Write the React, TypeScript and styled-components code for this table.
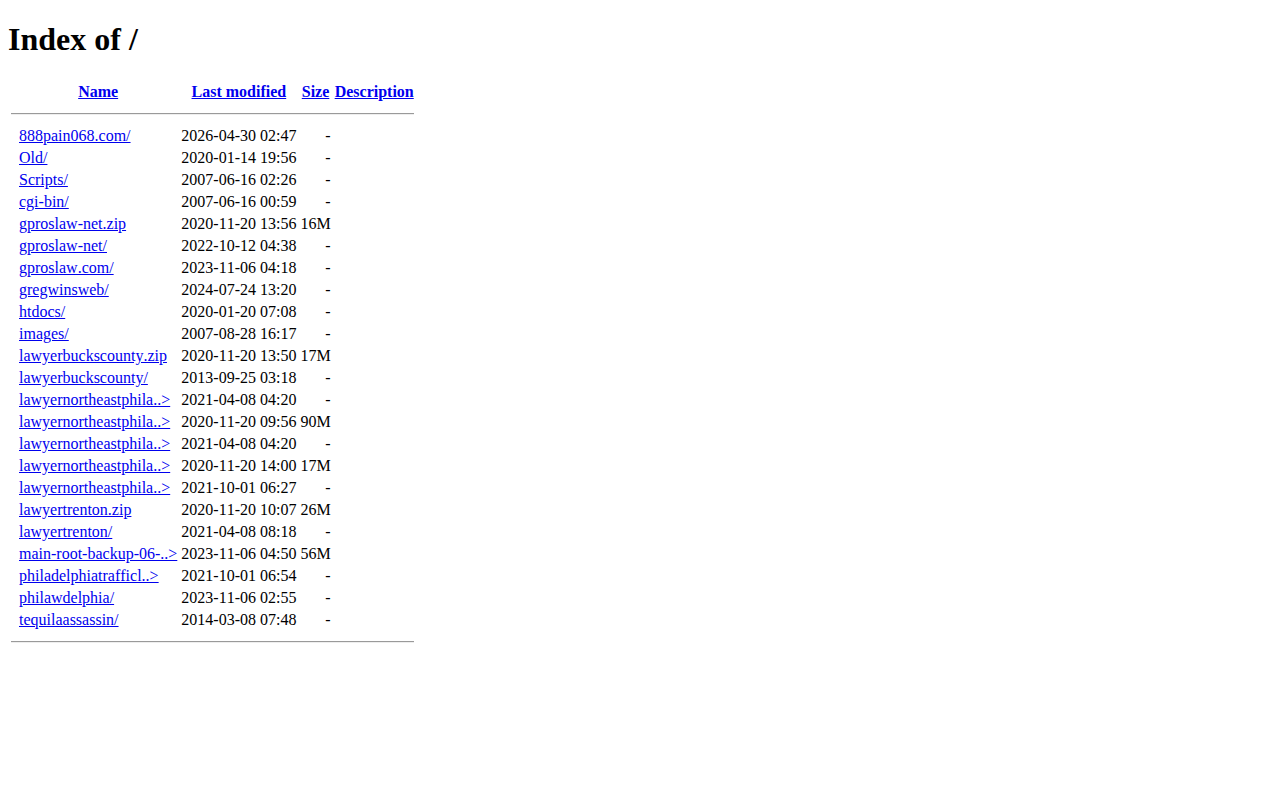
import React from "react";
import styled, { createGlobalStyle } from "styled-components";

const Global = createGlobalStyle`
  html, body {
    background: #ffffff;
  }
  body {
    margin: 8px;
    font-family: "Liberation Serif", "Times New Roman", serif;
    font-size: 16px;
    color: #000000;
    font-kerning: none;
    font-feature-settings: "kern" 0;
  }
`;

const Title = styled.h1`
  font-size: 2em;
  font-weight: bold;
  margin: 13.44px 0 21.44px;
`;

const Listing = styled.table`
  border-collapse: separate;
  border-spacing: 2px;
  font-size: 16px;
`;

const HeadCell = styled.th`
  padding: 1px;
  font-weight: bold;
  text-align: center;
  vertical-align: middle;
`;

const Cell = styled.td<{ $right?: boolean }>`
  padding: 1px;
  text-align: ${(p) => (p.$right ? "right" : "left")};
  vertical-align: middle;
`;

const Link = styled.a`
  color: #0000ee;
  text-decoration: underline;
`;

const Rule = styled.hr`
  margin: 8px 0;
  border: none;
  border-top: 1px solid #9a9a9a;
  border-bottom: 1px solid #eeeeee;
  height: 0;
`;

type Entry = { name: string; date: string; size: string };

const entries: Entry[] = [
  { name: "888pain068.com/", date: "2026-04-30 02:47", size: "-" },
  { name: "Old/", date: "2020-01-14 19:56", size: "-" },
  { name: "Scripts/", date: "2007-06-16 02:26", size: "-" },
  { name: "cgi-bin/", date: "2007-06-16 00:59", size: "-" },
  { name: "gproslaw-net.zip", date: "2020-11-20 13:56", size: "16M" },
  { name: "gproslaw-net/", date: "2022-10-12 04:38", size: "-" },
  { name: "gproslaw.com/", date: "2023-11-06 04:18", size: "-" },
  { name: "gregwinsweb/", date: "2024-07-24 13:20", size: "-" },
  { name: "htdocs/", date: "2020-01-20 07:08", size: "-" },
  { name: "images/", date: "2007-08-28 16:17", size: "-" },
  { name: "lawyerbuckscounty.zip", date: "2020-11-20 13:50", size: "17M" },
  { name: "lawyerbuckscounty/", date: "2013-09-25 03:18", size: "-" },
  { name: "lawyernortheastphila..>", date: "2021-04-08 04:20", size: "-" },
  { name: "lawyernortheastphila..>", date: "2020-11-20 09:56", size: "90M" },
  { name: "lawyernortheastphila..>", date: "2021-04-08 04:20", size: "-" },
  { name: "lawyernortheastphila..>", date: "2020-11-20 14:00", size: "17M" },
  { name: "lawyernortheastphila..>", date: "2021-10-01 06:27", size: "-" },
  { name: "lawyertrenton.zip", date: "2020-11-20 10:07", size: "26M" },
  { name: "lawyertrenton/", date: "2021-04-08 08:18", size: "-" },
  { name: "main-root-backup-06-..>", date: "2023-11-06 04:50", size: "56M" },
  { name: "philadelphiatrafficl..>", date: "2021-10-01 06:54", size: "-" },
  { name: "philawdelphia/", date: "2023-11-06 02:55", size: "-" },
  { name: "tequilaassassin/", date: "2014-03-08 07:48", size: "-" },
];

export default function App() {
  return (
    <>
      <Global />
      <Title>Index of /</Title>
      <Listing>
        <tbody>
          <tr>
            <HeadCell>&nbsp;</HeadCell>
            <HeadCell>
              <Link href="#">Name</Link>
            </HeadCell>
            <HeadCell>
              <Link href="#">Last modified</Link>
            </HeadCell>
            <HeadCell>
              <Link href="#">Size</Link>
            </HeadCell>
            <HeadCell>
              <Link href="#">Description</Link>
            </HeadCell>
          </tr>
          <tr>
            <HeadCell colSpan={5}>
              <Rule />
            </HeadCell>
          </tr>
          {entries.map((e, i) => (
            <tr key={i}>
              <Cell>&nbsp;</Cell>
              <Cell>
                <Link href="#">{e.name}</Link>
              </Cell>
              <Cell $right>{e.date + "  "}</Cell>
              <Cell $right>{"  " + e.size + " "}</Cell>
              <Cell>&nbsp;</Cell>
            </tr>
          ))}
          <tr>
            <HeadCell colSpan={5}>
              <Rule />
            </HeadCell>
          </tr>
        </tbody>
      </Listing>
    </>
  );
}
